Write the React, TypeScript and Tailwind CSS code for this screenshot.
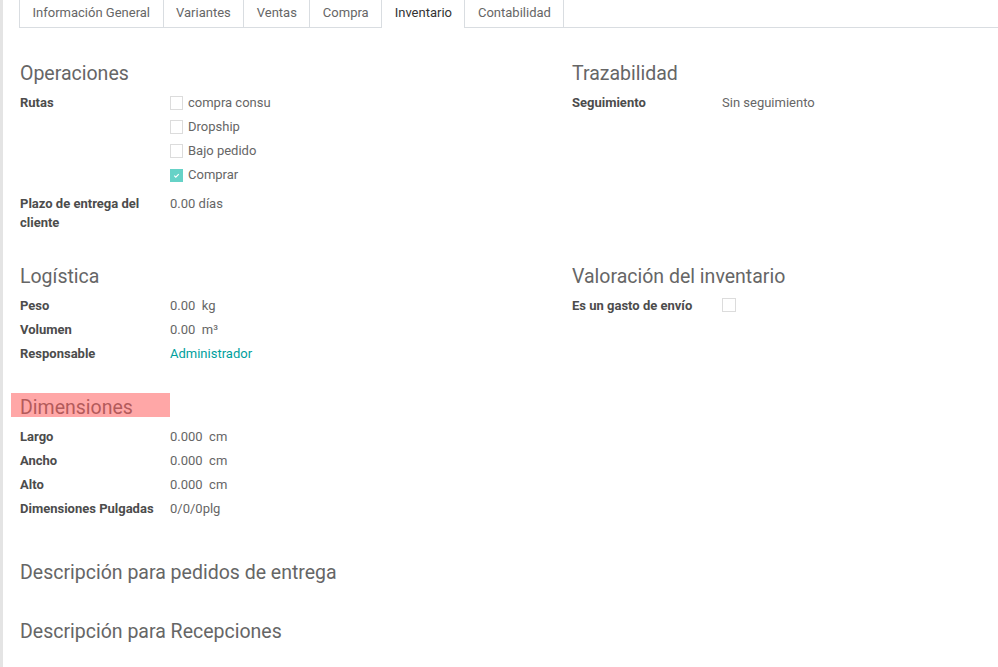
import React from "react";

const tabs = [
  "Información General",
  "Variantes",
  "Ventas",
  "Compra",
  "Inventario",
  "Contabilidad",
];

const Check: React.FC<{ checked?: boolean }> = ({ checked }) =>
  checked ? (
    <span className="inline-flex h-[13px] w-[13px] items-center justify-center bg-[#66d2c7]">
      <svg width="9" height="9" viewBox="0 0 10 10" fill="none">
        <path d="M2.5 5.2l1.7 1.6 3.3-3.4" stroke="#fff" strokeWidth="1.3" />
      </svg>
    </span>
  ) : (
    <span className="inline-block h-[14px] w-[14px] border border-[#dcdcdc] bg-white" />
  );

const Heading: React.FC<{ children: React.ReactNode; marked?: boolean }> = ({ children, marked }) => (
  <div className="relative h-[28px] text-[19.5px] leading-[28px] text-[#666]">
    {children}
    {marked && (
      <span className="absolute left-[-9px] top-[-1px] h-[24px] w-[159px] bg-[#ff5050]/50" />
    )}
  </div>
);

const Row: React.FC<{ label: string; children: React.ReactNode; className?: string }> = ({
  label,
  children,
  className = "",
}) => (
  <div className={`flex ${className}`}>
    <div className="w-[150px] shrink-0 pr-[10px] text-[13px] font-bold leading-[19px] text-[#4c4c4c]">
      {label}
    </div>
    <div className="text-[13px] leading-[19px] text-[#666]">{children}</div>
  </div>
);

const Line: React.FC<{ label: string; children: React.ReactNode }> = ({ label, children }) => (
  <Row label={label} className="h-[24px] items-center">
    {children}
  </Row>
);

export default function App() {
  return (
    <div
      className="flex h-[667px] w-[998px] flex-col overflow-hidden border-l-[3px] border-[#e4e4e4] bg-white pl-[16px]"
      style={{ fontFamily: "Roboto, 'Noto Sans', sans-serif" }}
    >
      {/* Tabs */}
      <ul className="flex h-[28px] shrink-0 border-b border-[#d9dde1]">
        {tabs.map((t, i) => {
          const active = t === "Inventario";
          return (
            <li
              key={t}
              className={`h-[28px] border-l border-[#d9dde1] px-[12.5px] pt-[5px] text-[13px] leading-[16px] ${
                i === tabs.length - 1 ? "border-r" : ""
              } ${active ? "relative z-10 bg-white text-[#333]" : "text-[#666]"}`}
            >
              {t}
            </li>
          );
        })}
      </ul>

      <div className="pl-px">
        <div className="grid grid-cols-[552px_1fr]">
          {/* Operaciones */}
          <div className="pt-[32px]">
            <Heading>Operaciones</Heading>
            <div className="mt-[3px] flex">
              <div className="flex h-[24px] w-[150px] items-center text-[13px] font-bold text-[#4c4c4c]">
                Rutas
              </div>
              <div className="flex flex-col">
                {[
                  ["compra consu", false],
                  ["Dropship", false],
                  ["Bajo pedido", false],
                  ["Comprar", true],
                ].map(([name, checked]) => (
                  <div key={name as string} className="flex h-[24px] items-center gap-[5px] text-[13px] text-[#666]">
                    <span className="flex w-[13px] justify-center">
                      <Check checked={checked as boolean} />
                    </span>
                    {name as string}
                  </div>
                ))}
              </div>
            </div>
            <Row label="Plazo de entrega del cliente" className="mt-[7px]">
              0.00 días
            </Row>
          </div>

          {/* Trazabilidad */}
          <div className="pt-[32px]">
            <Heading>Trazabilidad</Heading>
            <div className="mt-[2px]">
              <Line label="Seguimiento">Sin seguimiento</Line>
            </div>
          </div>

          {/* Logística */}
          <div className="pt-[31px]">
            <Heading>Logística</Heading>
            <div className="mt-[2px]">
              <Line label="Peso">0.00&nbsp; kg</Line>
              <Line label="Volumen">0.00&nbsp; m³</Line>
              <Line label="Responsable">
                <span className="text-[#00a09d]">Administrador</span>
              </Line>
            </div>
          </div>

          {/* Valoración */}
          <div className="pt-[31px]">
            <Heading>Valoración del inventario</Heading>
            <div className="mt-[2px]">
              <Line label="Es un gasto de envío">
                <span className="flex items-center">
                  <Check />
                </span>
              </Line>
            </div>
          </div>

          {/* Dimensiones */}
          <div className="pt-[29px]">
            <Heading marked>Dimensiones</Heading>
            <div className="mt-[2px]">
              <Line label="Largo">0.000&nbsp; cm</Line>
              <Line label="Ancho">0.000&nbsp; cm</Line>
              <Line label="Alto">0.000&nbsp; cm</Line>
              <Line label="Dimensiones Pulgadas">0/0/0plg</Line>
            </div>
          </div>
          <div />
        </div>

        <div className="pt-[39px]">
          <Heading>Descripción para pedidos de entrega</Heading>
        </div>
        <div className="pt-[31px]">
          <Heading>Descripción para Recepciones</Heading>
        </div>
      </div>
    </div>
  );
}
